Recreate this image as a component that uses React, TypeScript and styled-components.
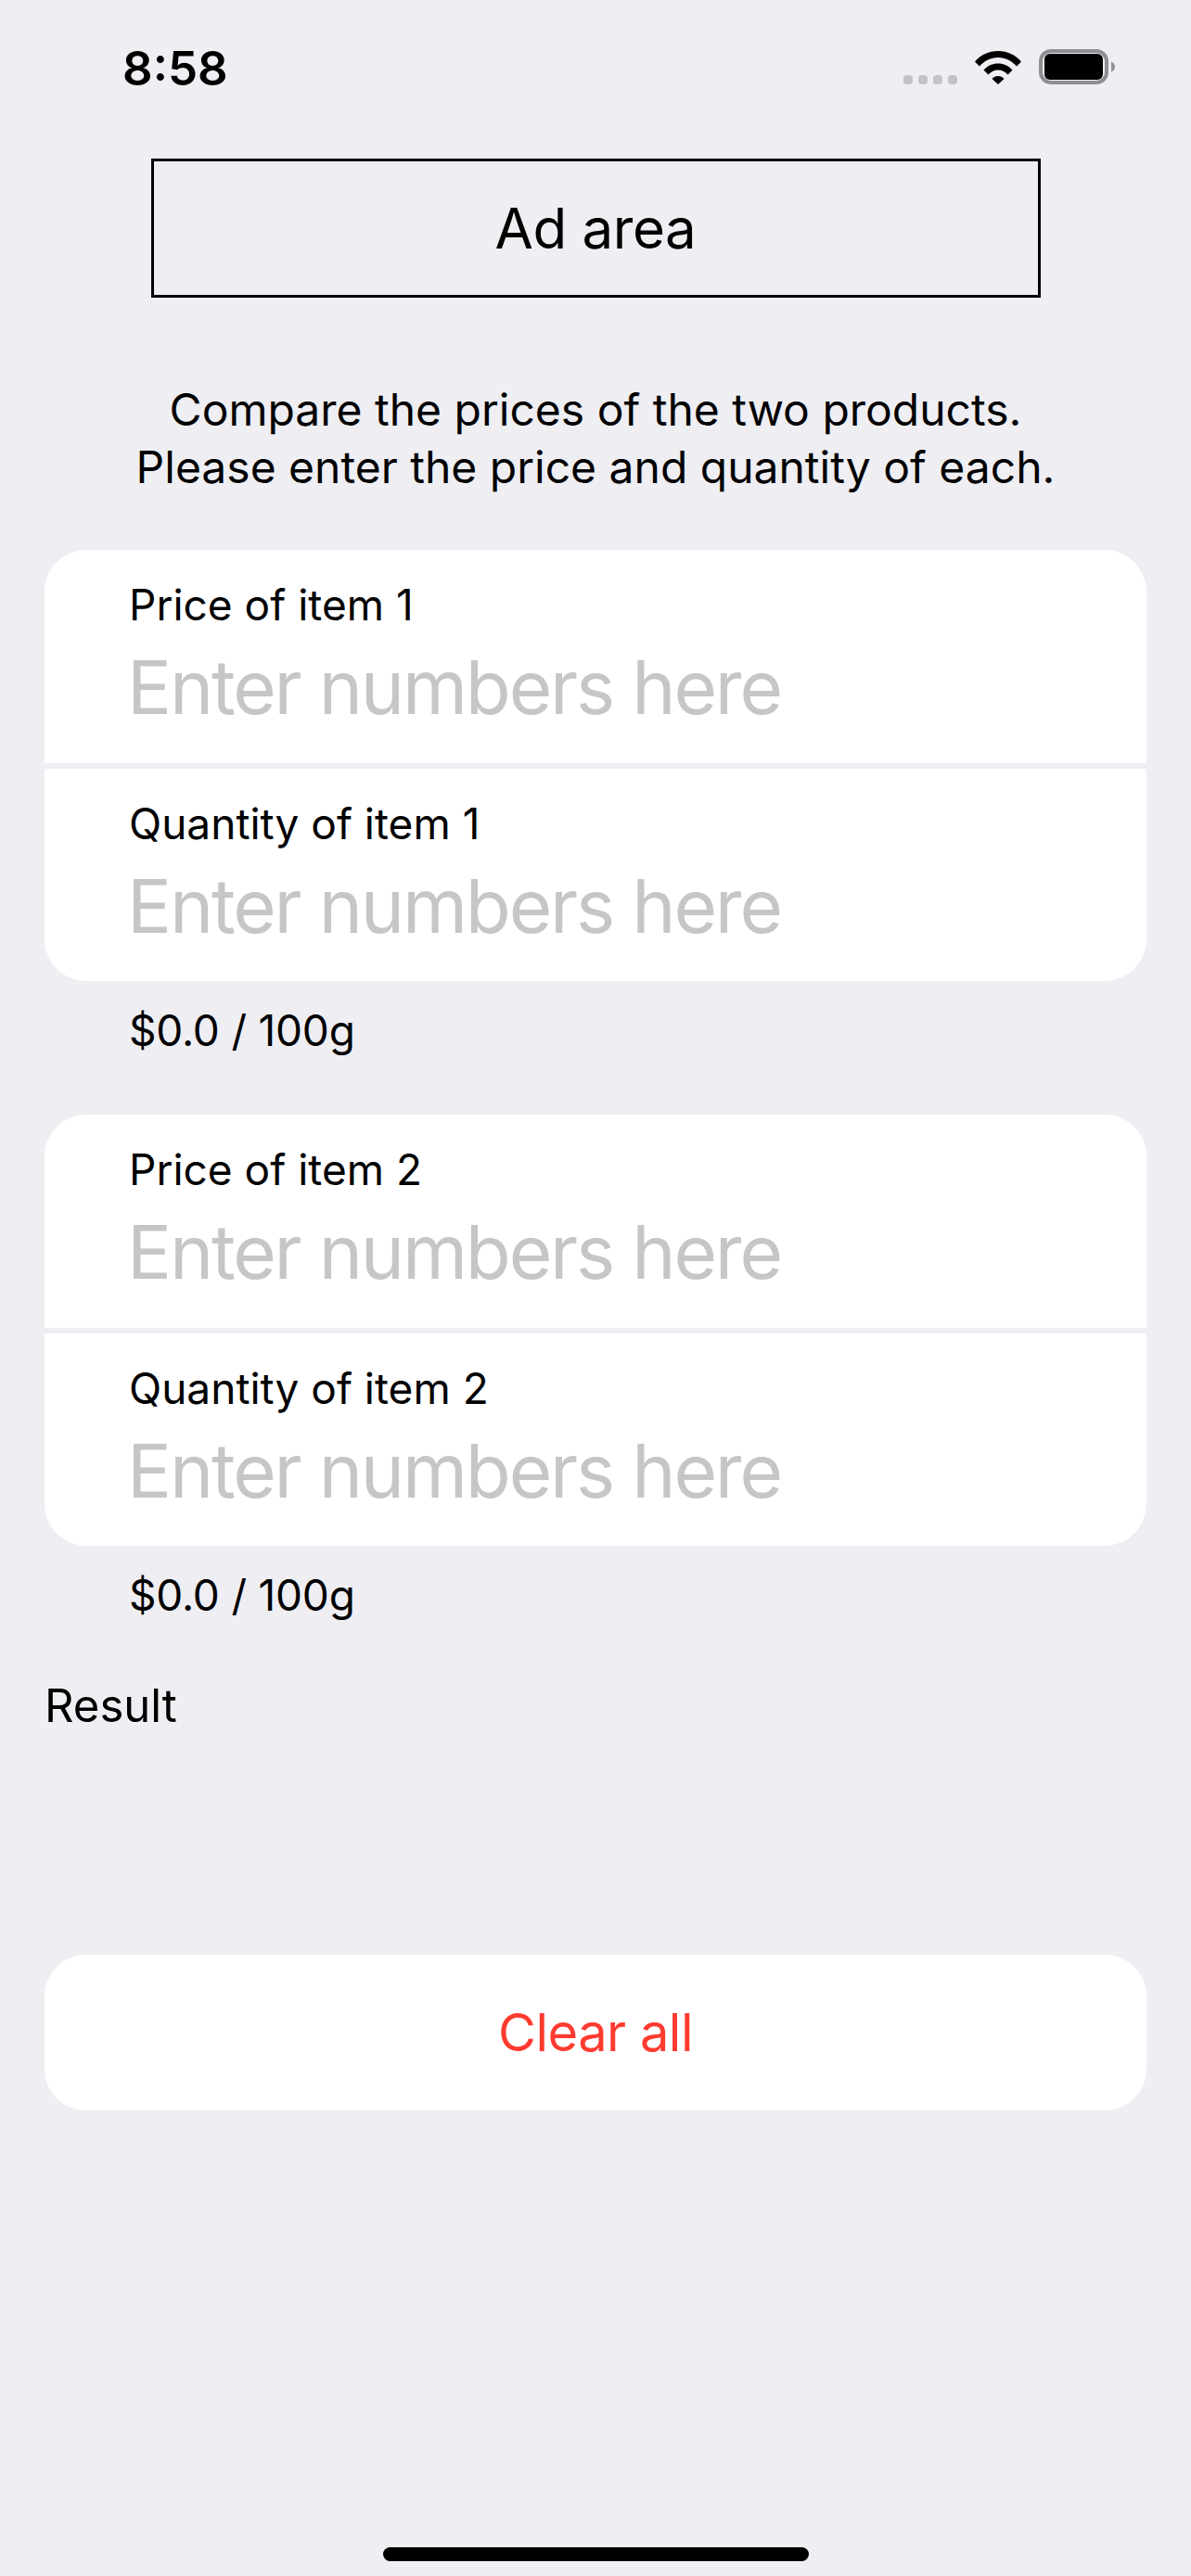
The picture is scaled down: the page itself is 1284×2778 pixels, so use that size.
import React from 'react';
import styled, { createGlobalStyle } from 'styled-components';

const GlobalStyle = createGlobalStyle`
  html, body {
    margin: 0;
    padding: 0;
    background: #eeeef3;
  }
  * {
    box-sizing: border-box;
  }
`;

const Page = styled.div`
  width: 1284px;
  height: 2778px;
  display: flex;
  flex-direction: column;
  background: #eeeef3;
  color: #000;
  font-family: Inter, 'Noto Sans', 'Liberation Sans', sans-serif;
  font-size: 48px;
  overflow: hidden;
`;

const StatusBar = styled.div`
  height: 171px;
  flex: none;
  display: flex;
  justify-content: space-between;
  align-items: flex-start;
  padding: 46px 82px 0 132px;
`;

const Clock = styled.div`
  font-size: 51px;
  line-height: 56px;
  font-weight: 600;
`;

const StatusIcons = styled.div`
  display: flex;
  align-items: flex-end;
  padding-top: 7px;
  gap: 19px;
`;

const AdBox = styled.div`
  flex: none;
  width: 959px;
  height: 150px;
  margin: 0 auto;
  border: 3px solid #000;
  display: flex;
  align-items: center;
  justify-content: center;
  font-size: 60px;
  letter-spacing: -0.4px;
`;

const Intro = styled.p`
  margin: 90px 0 0;
  text-align: center;
  font-size: 48px;
  line-height: 62px;
`;

const Card = styled.div`
  margin: 0 48px;
  background: #fff;
  border-radius: 45px;
  overflow: hidden;
`;

const Group = styled(Card)<{ $top: number }>`
  margin-top: ${(p) => p.$top}px;
`;

const Field = styled.div`
  height: 230px;
  padding: 31px 0 0 91px;

  & + & {
    height: 235px;
    border-top: 6px solid #eeeef3;
  }
`;

const Label = styled.div`
  font-size: 46px;
  line-height: 56px;
`;

const Placeholder = styled.div`
  margin: 14px 0 0 -2px;
  font-size: 80px;
  line-height: 94px;
  letter-spacing: -2.2px;
  color: #c6c6c8;
`;

const UnitPrice = styled.div`
  margin: 25px 0 0 139px;
  font-size: 46px;
  line-height: 56px;
  letter-spacing: -0.2px;
`;

const ResultLabel = styled.div`
  margin: 62px 0 0 48px;
  font-size: 49px;
  line-height: 60px;
`;

const ClearButton = styled.div`
  margin: 238px 48px 0;
  height: 168px;
  background: #fff;
  border-radius: 45px;
  display: flex;
  align-items: center;
  justify-content: center;
  font-size: 56px;
  letter-spacing: -0.5px;
  color: #ff3b30;
`;

const HomeIndicator = styled.div`
  flex: none;
  width: 459px;
  height: 15px;
  margin: auto auto 16px;
  border-radius: 8px;
  background: #000;
`;

function SignalDots() {
  return (
    <svg width="58" height="10" viewBox="0 0 58 10">
      {[0, 16, 32, 48].map((x) => (
        <rect key={x} x={x} width="10" height="10" rx="4" fill="#c2c2c7" />
      ))}
    </svg>
  );
}

function Wifi() {
  return (
    <svg width="50" height="37" viewBox="0 0 50 37">
      <path d="M0 12.500C6.500 5 15 1 25 1s18.500 4 25 11.500l-5 5C39.500 11.500 33 8 25 8S10.500 11.500 5 17.500Z" />
      <path d="M9.500 21.500C13.500 17 19 14.500 25 14.500s11.500 2.500 15.500 7l-5 5C33 23.500 29.500 21.500 25 21.500s-8 2-10.500 5Z" />
      <path d="M18.500 31C20 29 22.500 28 25 28s5 1 6.500 3L25 37Z" />
    </svg>
  );
}

function Battery() {
  return (
    <svg width="82" height="38" viewBox="0 0 82 38">
      <rect x="2" y="2" width="71" height="34" rx="11" fill="none" stroke="#8e8e93" strokeWidth="4" />
      <rect x="6" y="5" width="63" height="28" rx="6" fill="#000" />
      <path d="M78 13.500c2.500 1 4 3 4 5.500s-1.500 4.500-4 5.500Z" fill="#8e8e93" />
    </svg>
  );
}

function ItemGroup({ item, top }: { item: number; top: number }) {
  return (
    <>
      <Group $top={top}>
        <Field>
          <Label>Price of item {item}</Label>
          <Placeholder>Enter numbers here</Placeholder>
        </Field>
        <Field>
          <Label>Quantity of item {item}</Label>
          <Placeholder>Enter numbers here</Placeholder>
        </Field>
      </Group>
      <UnitPrice>$0.0 / 100g</UnitPrice>
    </>
  );
}

export default function App() {
  return (
    <Page>
      <GlobalStyle />
      <StatusBar>
        <Clock>8:58</Clock>
        <StatusIcons>
          <SignalDots />
          <Wifi />
          <Battery />
        </StatusIcons>
      </StatusBar>
      <AdBox>Ad area</AdBox>
      <Intro>
        Compare the prices of the two products.
        <br />
        Please enter the price and quantity of each.
      </Intro>
      <ItemGroup item={1} top={58} />
      <ItemGroup item={2} top={63} />
      <ResultLabel>Result</ResultLabel>
      <ClearButton>Clear all</ClearButton>
      <HomeIndicator />
    </Page>
  );
}
